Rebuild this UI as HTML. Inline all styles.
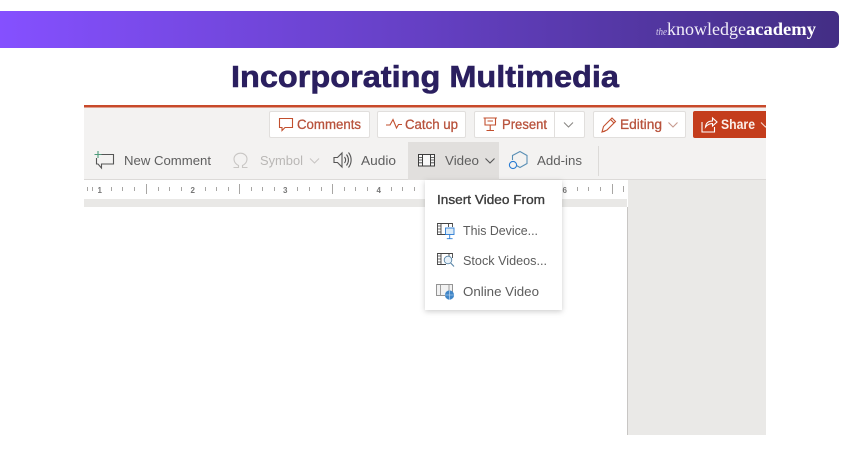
<!DOCTYPE html>
<html lang="en">
<head>
<meta charset="utf-8">
<title>Incorporating Multimedia</title>
<style>
html,body{margin:0;padding:0;background:#fff;width:850px;height:450px;overflow:hidden}
svg{display:block}
text{font-family:"Liberation Sans",sans-serif}
.r{fill:#b8523c;font-size:13.5px;stroke:#b8523c;stroke-width:.3}
.d{fill:#5e5e5e;font-size:13px}
.m{fill:#5c5c5c;font-size:13px}
.i{fill:none;stroke:#c2502f;stroke-width:1.1}
.g{fill:none;stroke:#555;stroke-width:1.1}
</style>
</head>
<body>
<svg width="850" height="450" viewBox="0 0 850 450" xmlns="http://www.w3.org/2000/svg">
<defs>
<linearGradient id="b" x1="0" x2="1" y1="0" y2="0">
<stop offset="0" stop-color="#8550ff"/>
<stop offset=".5" stop-color="#6540c4"/>
<stop offset="1" stop-color="#432e84"/>
</linearGradient>
<filter id="s" x="-20%" y="-20%" width="140%" height="140%"><feDropShadow dx="0" dy="1.5" stdDeviation="3" flood-color="#000" flood-opacity=".2"/></filter>
<filter id="bl"><feGaussianBlur stdDeviation=".35"/></filter>
<clipPath id="c"><rect x="84" y="100" width="682" height="340"/></clipPath>
</defs>

<path d="M0 11H833a6 6 0 0 1 6 6V42a6 6 0 0 1-6 6H0Z" fill="url(#b)"/>
<text x="656" y="35" font-size="10" font-style="italic" fill="#d9d2ee" textLength="11" lengthAdjust="spacingAndGlyphs" style='font-family:"Liberation Serif",serif'>the</text>
<text x="667" y="35" font-size="17.5" fill="#f1eef9" textLength="79" lengthAdjust="spacingAndGlyphs" style='font-family:"Liberation Serif",serif'>knowledge</text>
<text x="746" y="35" font-size="17.5" font-weight="bold" fill="#fff" textLength="70" lengthAdjust="spacingAndGlyphs" style='font-family:"Liberation Serif",serif'>academy</text>

<text x="231" y="87" font-size="31" font-weight="bold" fill="#2a1f5f" stroke="#2a1f5f" stroke-width=".6" textLength="388" lengthAdjust="spacingAndGlyphs">Incorporating Multimedia</text>

<g clip-path="url(#c)" filter="url(#bl)">
<rect x="84" y="105" width="682" height="75" fill="#f3f2f1"/>
<rect x="84" y="105" width="682" height="2.5" fill="#c8492a"/>
<rect x="84" y="179" width="682" height="1" fill="#dcdad8"/>
<rect x="84" y="180" width="543" height="19" fill="#fff"/>
<rect x="84" y="199" width="543" height="8" fill="#e9e8e6"/>
<rect x="84" y="207" width="543" height="228" fill="#fff"/>
<rect x="628" y="180" width="138" height="255" fill="#eae9e7"/>
<rect x="627" y="207" width="1" height="228" fill="#c8c6c4"/>

<g fill="#fff" stroke="#e1dfdd">
<rect x="269.5" y="111.5" width="100" height="26" rx="1.5"/>
<rect x="377.5" y="111.5" width="88" height="26" rx="1.5"/>
<rect x="474.5" y="111.5" width="110" height="26" rx="1.5"/>
<rect x="593.5" y="111.5" width="92" height="26" rx="1.5"/>
</g>
<rect x="554" y="112" width="1" height="25" fill="#e1dfdd"/>
<rect x="693" y="111" width="80" height="27" rx="2" fill="#c43e1c"/>

<path class="i" d="M279.5 118.5H292.5V127.5H285L282 130.5V127.5H279.5Z"/>
<text class="r" x="297" y="129" textLength="64" lengthAdjust="spacingAndGlyphs">Comments</text>
<path class="i" stroke-width="1.6" d="M386 125H390L393 119.5L396.5 128L398.5 124.5H402"/>
<text class="r" x="405" y="129" textLength="53" lengthAdjust="spacingAndGlyphs">Catch up</text>
<path class="i" d="M483.5 118H497M485 118V125H495.5V118M487.5 121H493M490.2 125V130.5M486.5 130.5H494"/>
<text class="r" x="502" y="129" textLength="45" lengthAdjust="spacingAndGlyphs">Present</text>
<path d="M564 122.5L568.5 127L573 122.5" fill="none" stroke="#8a8886" stroke-width="1.1"/>
<path class="i" stroke-width="1.3" d="M602 132L603.5 126.5L612 118L615.5 121.5L607 130ZM602 132L606 131M610.5 119.5L614 123"/>
<text class="r" x="620" y="129" textLength="42" lengthAdjust="spacingAndGlyphs">Editing</text>
<path d="M668.5 122.5L673 127L677.5 122.5" fill="none" stroke="#c79a8e" stroke-width="1.1"/>
<path d="M702 122V132H714.5V127M705.5 127C706 122.5 709 121 712.5 121V118L717 122L712.5 126V123.5C709.5 123.5 707.5 124.5 705.5 127Z" fill="none" stroke="#fff" stroke-width="1.1"/>
<text x="721" y="129" font-size="13.5" font-weight="bold" fill="#fbeee9" textLength="34" lengthAdjust="spacingAndGlyphs">Share</text>
<path d="M761 122.5L765.5 127L770 122.5" fill="none" stroke="#f4d8cf" stroke-width="1.1"/>

<rect x="408" y="142" width="91" height="38" fill="#e1dfdd"/>
<rect x="598" y="146" width="1" height="30" fill="#dcdad8"/>

<path class="g" d="M101 154.5H113.5V164H101.5V168L98 164H96.5V158"/>
<path d="M98 151V158M94.5 154.5H101.5" stroke="#4e9a7a" stroke-width="1.1" fill="none"/>
<text class="d" x="124" y="165" textLength="87" lengthAdjust="spacingAndGlyphs">New Comment</text>
<path d="M233.5 167.5H238.5V165.5C235.5 164 234 161.5 234 159C234 155.5 237 153.2 240.5 153.2C244 153.2 247 155.5 247 159C247 161.5 245.5 164 242.5 165.5V167.5H247.5" fill="none" stroke="#c8c6c4" stroke-width="1.1"/>
<text x="260" y="165" font-size="13" fill="#b9b7b5" textLength="43" lengthAdjust="spacingAndGlyphs">Symbol</text>
<path d="M310 158.5L314.5 163L319 158.5" fill="none" stroke="#c8c6c4" stroke-width="1.1"/>
<path class="g" d="M334 157.5H337.5L342 153V167L337.5 162.5H334ZM344.5 157C346 159 346 161 344.5 163M346.5 154.5C349 158 349 162 346.5 165.5M348.5 152.5C352 157 352 163 348.5 167.5"/>
<text class="d" x="361" y="165" textLength="35" lengthAdjust="spacingAndGlyphs">Audio</text>
<rect x="418.5" y="154.5" width="16" height="11.5" fill="#f8f8f8" stroke="#3c3c3c" stroke-width="1"/>
<path d="M422.5 155V166M430.5 155V166" stroke="#3c3c3c" stroke-width="1"/>
<path d="M419 157.5H422M419 160H422M419 162.8H422M431 157.5H434M431 160H434M431 162.8H434" stroke="#3c3c3c" stroke-width=".8"/>
<text class="d" x="445" y="165" textLength="34" lengthAdjust="spacingAndGlyphs">Video</text>
<path d="M485.5 158.5L490 163L494.5 158.5" fill="none" stroke="#555" stroke-width="1.1"/>
<path d="M512.5 160V155.5L520 151.5L527 155.5V163.5L520 167.5L516.5 165.5" fill="none" stroke="#5a8fb5" stroke-width="1.1"/>
<circle cx="513" cy="165" r="3.6" fill="#f3f2f1" stroke="#2b7cd3" stroke-width="1.1"/>
<text class="d" x="537" y="165" textLength="45" lengthAdjust="spacingAndGlyphs">Add-ins</text>

<g fill="#777" font-size="8" style="font-weight:bold">
<text x="97.5" y="193">1</text><text x="190.5" y="193">2</text><text x="283" y="193">3</text><text x="376.5" y="193">4</text><text x="562.5" y="193">6</text>
</g>
<path stroke="#a8a6a4" stroke-width="1" fill="none" d="M87.5 187V191M92.5 187V191M111.5 187V191M122.5 187V191M134.5 187V191M158.5 187V191M169.5 187V191M181.5 187V191M205.5 187V191M216.5 187V191M228.5 187V191M251.5 187V191M262.5 187V191M274.5 187V191M297.5 187V191M309.5 187V191M321.5 187V191M344.5 187V191M355.5 187V191M367.5 187V191M391.5 187V191M402.5 187V191M414.5 187V191M577.5 187V191M588.5 187V191M600.5 187V191M623.5 186V192M146.5 184V194M239.5 184V194M332.5 184V194M612.5 184V194"/>

<rect x="425" y="180" width="137" height="130" fill="#fff" filter="url(#s)"/>
<text x="437" y="204" font-size="13" fill="#3c3c3c" stroke="#3c3c3c" stroke-width=".35" textLength="108" lengthAdjust="spacingAndGlyphs">Insert Video From</text>

<g fill="none" stroke="#444" stroke-width=".9">
<path d="M446 234.5H437.5V223.5H452.5V227M441 224V234M448.5 224V227"/>
<path d="M437.5 226H441M437.5 229H441M437.5 232H441" stroke-width=".7"/>
<path d="M446 264.5H437.5V253.5H452.5V258M441 254V264M449 254V257"/>
<path d="M437.5 256H441M437.5 259H441M437.5 262H441" stroke-width=".7"/>
</g>
<rect x="445.5" y="228" width="8.5" height="6.5" fill="#dcebf7" stroke="#2b7cd3" stroke-width=".9"/>
<path d="M449.7 234.5V238.5M446.8 238.7H452.6" stroke="#2b7cd3" stroke-width=".9" fill="none"/>
<circle cx="448" cy="260" r="3.8" fill="#e8f2fa" stroke="#5a86a8" stroke-width=".9"/>
<path d="M450.7 263L454 266.5" stroke="#5a86a8" stroke-width="1.1"/>
<rect x="436.5" y="284.5" width="16" height="11" fill="#f2f2f2" stroke="#8a8a8a" stroke-width=".9"/>
<path d="M440.5 285V295M449 285V295" stroke="#8a8a8a" stroke-width=".8"/>
<circle cx="449.5" cy="295" r="4.6" fill="#3f86c8"/>
<path d="M445 295H454M449.5 290.5V299.5" stroke="#cfe2f3" stroke-width=".6"/>
<text class="m" x="463" y="235" textLength="75" lengthAdjust="spacingAndGlyphs">This Device...</text>
<text class="m" x="463" y="265" textLength="84" lengthAdjust="spacingAndGlyphs">Stock Videos...</text>
<text class="m" x="463" y="296" textLength="76" lengthAdjust="spacingAndGlyphs">Online Video</text>
</g>
</svg>
</body>
</html>
